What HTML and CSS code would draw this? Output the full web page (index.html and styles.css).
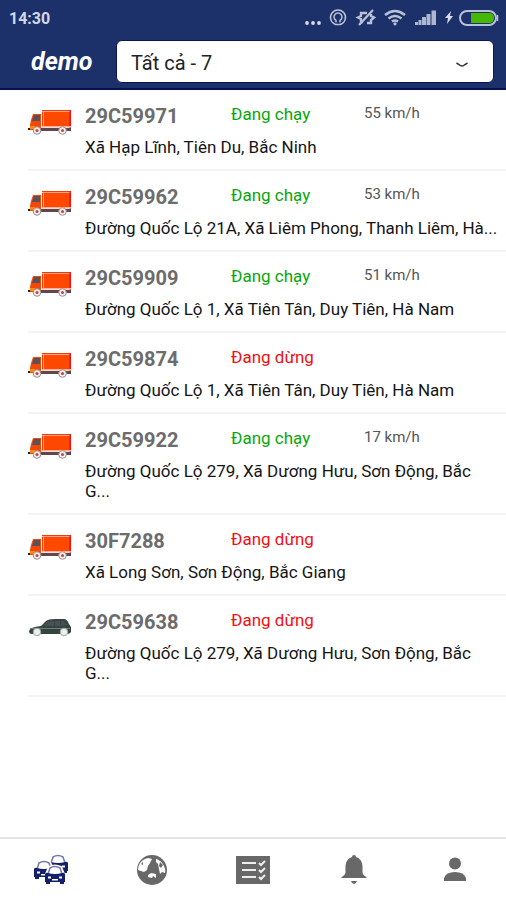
FILE: index.html
```html
<!DOCTYPE html>
<html lang="vi">
<head>
<meta charset="utf-8">
<meta name="viewport" content="width=device-width, initial-scale=1">
<title>demo</title>
<link rel="stylesheet" href="styles.css">
</head>
<body>
<svg class="defs" aria-hidden="true">
  <symbol id="truck" viewBox="0 0 44 26">
    <path fill="#5f4650" d="M5 18h38v3H5z"/>
    <path fill="#f23c06" d="M14 0h29v17H14z"/>
    <path fill="#ff4800" d="M16 2h25v14H16z"/>
    <path stroke="#ffa58c" d="M14 1.500h28M15.500 1v15"/>
    <path stroke="#e01818" stroke-width="1.500" d="M42.300 0v18"/>
    <path fill="#ffb09a" d="M14 16h29v1.500H14z"/>
    <path fill="#f4480a" d="M5 4h8v16H2v-5l1-5z"/>
    <path fill="#5a5058" d="M6 5h6v6H4z"/>
    <path fill="#ff8a00" d="M2 16h5v3H2z"/>
    <path fill="#222" d="M0 18h2v2H0z"/>
    <g fill="#eee" stroke="#9a908e"><circle cx="9" cy="20.500" r="3.800"/><circle cx="34.500" cy="20.500" r="3.800"/></g>
    <g fill="#c4453a"><circle cx="9" cy="20.500" r="1.500"/><circle cx="34.500" cy="20.500" r="1.500"/></g>
  </symbol>
  <symbol id="car" viewBox="0 0 44 26">
    <path fill="#34453f" d="M1 15q1-4 12-5l5-5q2-2 9-2h9q3 0 5 5l2 3v5q-1 2-4 2H4q-3 0-3-3z"/>
    <path fill="#4c4d5b" d="M15 10l4-4q1-1 4-1h3v5zM27 5h5v5h-5zM33 5h3l3 4-6 1z"/>
    <path stroke="#6d8077" d="M2 12.500h40"/>
    <g fill="#eee" stroke="#9aa39f"><circle cx="9" cy="16" r="3.800"/><circle cx="36" cy="16" r="3.800"/></g>
  </symbol>
</svg>
<div class="app">
  <header class="top">
    <div class="status">
      <span class="clock">14:30</span>
      <svg class="signals" width="196" height="20" viewBox="0 0 196 20" fill="none" stroke="#b9c0d8" aria-hidden="true">
        <g fill="#d8dcea" stroke="none"><circle cx="3" cy="15" r="1.900"/><circle cx="9" cy="15" r="1.900"/><circle cx="15" cy="15" r="1.900"/></g>
        <path stroke-width="1.500" d="M31.500 16.500a7.500 7.500 0 1 1 5 0zM32 14.500v-2a4 4 0 1 1 4 0v2"/>
        <path stroke-width="2.400" d="M59 14h-2v-3l-3-1.500L57 8V5h6M63 15h4v-3l3-2.500L67 8V6"/>
        <path stroke-width="2.200" d="M55 17 69 2"/>
        <path stroke-width="2.600" d="M81 7q10-8 20 0M84.500 10.500q6.500-5 13 0M88 13.500q3-2 6 0"/>
        <circle cx="91" cy="15.800" r="1.600" fill="#b9c0d8" stroke="none"/>
        <path fill="#aeb6d0" stroke="none" d="M111 14h3v3h-3zM114.500 12h3v5h-3zM118 9h4v8h-4zM122.500 6h4v11h-4zM127.500 2.500h4.500V17h-4.500z"/>
        <path fill="#d8dcea" stroke="none" d="m147 3-6 7h3l-1 6 6-8h-3z"/>
        <rect x="156" y="3" width="36" height="14" rx="7" stroke-width="2"/>
        <path fill="#46b800" stroke="none" d="M167 5h18q5 0 5 5t-5 5h-18z"/>
        <path stroke-width="1.500" d="M193.500 7v6"/>
      </svg>
    </div>
    <div class="bar">
      <h1 class="brand">demo</h1>
      <div class="picker">
        <select class="filter" aria-label="Nhóm xe"><option>Tất cả - 7</option></select>
        <svg class="chevron" width="14" height="8" viewBox="0 0 14 8" fill="none" stroke="#333" stroke-width="1.500" aria-hidden="true"><path d="M1.500 2 4 3.500q3 3 6 0L12.500 2"/></svg>
      </div>
    </div>
  </header>
  <main class="list">
    <article class="row"><svg class="vehicle" aria-hidden="true"><use href="#truck"/></svg><div class="info"><div class="line"><h2 class="plate">29C59971</h2><span class="state run">Đang chạy</span><span class="speed">55 km/h</span></div><p class="place">Xã Hạp Lĩnh, Tiên Du, Bắc Ninh</p></div></article>
    <article class="row"><svg class="vehicle" aria-hidden="true"><use href="#truck"/></svg><div class="info"><div class="line"><h2 class="plate">29C59962</h2><span class="state run">Đang chạy</span><span class="speed">53 km/h</span></div><p class="place">Đường Quốc Lộ 21A, Xã Liêm Phong, Thanh Liêm, Hà...</p></div></article>
    <article class="row"><svg class="vehicle" aria-hidden="true"><use href="#truck"/></svg><div class="info"><div class="line"><h2 class="plate">29C59909</h2><span class="state run">Đang chạy</span><span class="speed">51 km/h</span></div><p class="place">Đường Quốc Lộ 1, Xã Tiên Tân, Duy Tiên, Hà Nam</p></div></article>
    <article class="row"><svg class="vehicle" aria-hidden="true"><use href="#truck"/></svg><div class="info"><div class="line"><h2 class="plate">29C59874</h2><span class="state stop">Đang dừng</span></div><p class="place">Đường Quốc Lộ 1, Xã Tiên Tân, Duy Tiên, Hà Nam</p></div></article>
    <article class="row"><svg class="vehicle" aria-hidden="true"><use href="#truck"/></svg><div class="info"><div class="line"><h2 class="plate">29C59922</h2><span class="state run">Đang chạy</span><span class="speed">17 km/h</span></div><p class="place">Đường Quốc Lộ 279, Xã Dương Hưu, Sơn Động, Bắc G...</p></div></article>
    <article class="row"><svg class="vehicle" aria-hidden="true"><use href="#truck"/></svg><div class="info"><div class="line"><h2 class="plate">30F7288</h2><span class="state stop">Đang dừng</span></div><p class="place">Xã Long Sơn, Sơn Động, Bắc Giang</p></div></article>
    <article class="row"><svg class="vehicle" aria-hidden="true"><use href="#car"/></svg><div class="info"><div class="line"><h2 class="plate">29C59638</h2><span class="state stop">Đang dừng</span></div><p class="place">Đường Quốc Lộ 279, Xã Dương Hưu, Sơn Động, Bắc G...</p></div></article>
  </main>
  <nav class="tabs">
    <button class="tab active" type="button" aria-label="Xe">
      <svg width="36" height="32" viewBox="0 0 36 32">
        <defs><g id="front"><path fill="#fff" stroke="#fff" stroke-width="2" d="M1 9 4 2q6-3 12 0l3 7v8H1z"/><path fill="none" stroke="#7078ae" stroke-width="1.500" d="M3 9 5 3q5-3 10 0l2 6"/><path fill="currentColor" d="M0 9q1-2 3-1 7 2 14 0 2-1 3 1v8h-1v2h-4v-2H5v2H1v-2H0z"/><path fill="#fff" d="M3 11.500h3v2H3zM14 11.500h3v2h-3zM7 14h6v1.500H7z"/></g></defs>
        <use href="#front" x="15" y="0"/><use href="#front" x="1" y="6"/><use href="#front" x="12" y="11"/>
      </svg>
    </button>
    <button class="tab" type="button" aria-label="Bản đồ">
      <svg width="32" height="32" viewBox="0 0 32 32"><circle cx="16" cy="16" r="15" fill="currentColor"/><path fill="#fff" d="M4 9q3-4 8-5l4 1-2 4-2 3-1 4-3 2-3-1-3-1q0-4 2-7zM20 5q5 1 8 7 2 4 1 7l-3-1-2 2-1-5-1-5-2-2z"/><path fill="currentColor" d="m24 8 3 3-2 3-2-2zM5 10l2-2v3z"/><path fill="#fff" d="m12 21 3-2 5 1v4l-3-2-1 2-4-1z"/></svg>
    </button>
    <button class="tab" type="button" aria-label="Báo cáo">
      <svg width="36" height="32" viewBox="0 0 36 32"><path fill="currentColor" d="M1 2h34v28H1z"/><path fill="none" stroke="#eee" stroke-width="2" d="M7 9h14M7 16h14M7 23h14M24 9l2 2 4-4M24 16l2 2 4-4M24 23l2 2 4-4"/></svg>
    </button>
    <button class="tab" type="button" aria-label="Thông báo">
      <svg width="32" height="32" viewBox="0 0 32 32" fill="currentColor"><path d="M16 1q2 0 2 2 6 2 6.500 9v6q0 3 4 5v1h-25v-1q4-2 4-5v-6q.5-7 6.500-9 0-2 2-2zM13 27h6q-1 3-3 3t-3-3z"/></svg>
    </button>
    <button class="tab" type="button" aria-label="Tài khoản">
      <svg width="32" height="32" viewBox="0 0 32 32" fill="currentColor"><circle cx="16" cy="9.500" r="6"/><path d="M5 27v-3q2-6 11-6t11 6v3z"/></svg>
    </button>
  </nav>
</div>
</body>
</html>
```
FILE: styles.css
```css
* { box-sizing: border-box; }
body { margin: 0; background: #fff; color: #151515; font-family: Roboto, "Noto Sans", sans-serif; }
h1, h2, p { margin: 0; }
.defs { display: none; }
.app { min-height: 100vh; display: flex; flex-direction: column; }
.top { background: #1c3069; border-bottom: 2px solid #071050; }
.status { display: flex; align-items: center; justify-content: space-between; height: 36px; padding: 0 6px 0 9px; }
.clock { color: #d3d8e8; font-size: 16px; font-weight: 700; }
.bar { display: flex; align-items: center; padding: 4px 12px 5px 31px; }
.brand { width: 85px; color: #fff; font-size: 25px; line-height: 32px; font-weight: 700; font-style: italic; }
.picker { position: relative; flex: 1; }
.filter {
  display: block; width: 100%; height: 43px; padding: 2px 14px 0;
  appearance: none; border: 1px solid #0b1458; border-radius: 6px; background: #fff;
  color: #222; font-family: inherit; font-size: 20px;
}
.chevron { position: absolute; right: 25px; top: 21px; pointer-events: none; }
.list { flex: 1; padding-left: 28px; }
.row { display: flex; gap: 13px; padding: 14px 8px 12px 0; border-bottom: 2px solid #f3f3f3; }
.vehicle { flex: none; width: 44px; height: 26px; margin-top: 6px; }
.info { flex: 1; min-width: 0; }
.line { display: grid; grid-template-columns: 146px 133px 1fr; height: 24px; }
.plate { color: #6c6c6c; font-size: 20px; line-height: 24px; font-weight: 700; }
.state { font-size: 17px; line-height: 20px; }
.run { color: #0aa60a; }
.stop { color: #f01010; }
.speed { color: #555; font-size: 15px; line-height: 18px; }
.place { margin-top: 9px; font-size: 17px; line-height: 20px; }
.tabs { display: flex; height: 63px; border-top: 2px solid #e4e4e4; }
.tab { flex: 1; display: flex; align-items: center; justify-content: center; padding: 0; border: 0; background: none; color: #686868; }
.active { color: #14206b; }
```
